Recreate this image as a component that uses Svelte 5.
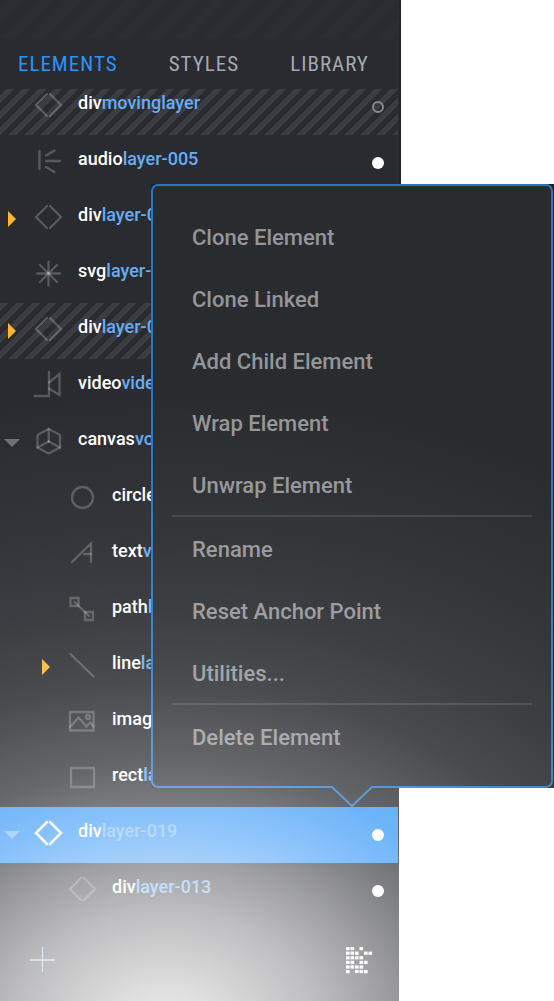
<script>
  const tabs = ['ELEMENTS', 'STYLES', 'LIBRARY'];
  let activeTab = $state('ELEMENTS');

  const layers = [
    { tag: 'div', name: 'movinglayer', icon: 'div', hatched: true, hollow: true },
    { tag: 'audio', name: 'layer-005', icon: 'audio' },
    { tag: 'div', name: 'layer-0', icon: 'div', caret: 'closed' },
    { tag: 'svg', name: 'layer-0', icon: 'svg' },
    { tag: 'div', name: 'layer-0', icon: 'div', caret: 'closed', hatched: true },
    { tag: 'video', name: 'video', icon: 'video' },
    { tag: 'canvas', name: 'vo', icon: 'canvas', caret: 'open' },
    { tag: 'circle', name: '', icon: 'circle', child: true },
    { tag: 'text', name: 'v', icon: 'text', child: true },
    { tag: 'path', name: 'l', icon: 'path', child: true },
    { tag: 'line', name: 'la', icon: 'line', child: true, caret: 'closed' },
    { tag: 'image', name: '', icon: 'image', child: true },
    { tag: 'rect', name: 'la', icon: 'rect', child: true }
  ];

  const selectedLayers = [
    { tag: 'div', name: 'layer-019', icon: 'div', caret: 'open', selected: true },
    { tag: 'div', name: 'layer-013', icon: 'div', child: true }
  ];

  const menuGroups = [
    ['Clone Element', 'Clone Linked', 'Add Child Element', 'Wrap Element', 'Unwrap Element'],
    ['Rename', 'Reset Anchor Point', 'Utilities...'],
    ['Delete Element']
  ];

  // Each entry is one stroke, so overlapping strokes build up brightness.
  const icons = {
    div: ['M19 9L8 20l11 11', 'M22 9l11 11-11 11'],
    audio: ['M11.5 10v18', 'M18 20h14', 'M18 14.5l8.500-5', 'M18 26l8.500 5'],
    svg: ['M20.500 9v23.500', 'M9 20.500h23', 'M12 12l17 17', 'M29 12l-17 17'],
    video: ['M6.500 31h14.500V7', 'M21 17.500l10.500-8.500v21l-10.500-6.500'],
    canvas: ['M20.700 8l11.300 6v12.500l-11.300 6-11.200-6V14z', 'M20.700 8v12.500', 'M20.700 20.500L9.500 26.500', 'M20.700 20.500L32 26.500'],
    circle: ['M10 20.500a10.500 10.500 0 1 0 21 0a10.500 10.500 0 1 0-21 0z'],
    text: ['M10 29L29 10.500V29', 'M22 21h7'],
    path: ['M8.500 9h8v8h-8z', 'M23 23h8v8h-8z', 'M12.500 13l14.500 14'],
    line: ['M8.500 9L31.500 31.500'],
    image: ['M8 11h23.500v18.500h-23.500z', 'M8 26l8.500-9.500 8 9M24 26l4.500-4.500 3 4', 'M24 16a2 2 0 1 0 4 0a2 2 0 1 0-4 0z'],
    rect: ['M9 11h23v19h-23z']
  };

  const bricks = ['110100', '111011', '111100', '110110', '111100', '101110'];
</script>

{#snippet row(layer)}
  <li class="row" class:hatched={layer.hatched} class:child={layer.child} class:selected={layer.selected}>
    <span class="gutter">
      {#if layer.caret}
        <button class="caret {layer.caret}" aria-label="Toggle {layer.tag}"></button>
      {/if}
    </span>
    <svg class="icon" viewBox="0 0 40 40" aria-hidden="true">
      {#each icons[layer.icon] as d}<path {d} />{/each}
    </svg>
    <span class="label"><b>{layer.tag}</b><span class="name">{layer.name}</span></span>
    <button class="dot" class:hollow={layer.hollow} aria-label="Visibility"></button>
  </li>
{/snippet}

<main>
  <aside>
    <div class="upper">
      <header>
        <div class="strip"></div>
        <nav>
          {#each tabs as tab}
            <button class:active={tab === activeTab} onclick={() => (activeTab = tab)}>{tab}</button>
          {/each}
        </nav>
      </header>
      <ul class="scrolled">
        {#each layers as layer}{@render row(layer)}{/each}
      </ul>
    </div>
    <ul>
      {#each selectedLayers as layer}{@render row(layer)}{/each}
    </ul>
    <footer>
      <button aria-label="Add element">
        <svg width="26" height="26" viewBox="0 0 26 26"><path d="M12.500 0v25" /><path class="wide" d="M0 13h25" /></svg>
      </button>
      <button aria-label="Pixel tools">
        <svg width="27" height="27" viewBox="0 0 27 27">
          {#each bricks as line, y}
            {#each line as cell, x}
              {#if cell === '1'}<rect x={x * 4.5} y={y * 4.6} width="3.6" height="3.2" />{/if}
            {/each}
          {/each}
        </svg>
      </button>
    </footer>
  </aside>

  <div class="popover">
    <div class="menu" role="menu">
      {#each menuGroups as group}
        <div class="group" role="group">
          {#each group as item}<button role="menuitem">{item}</button>{/each}
        </div>
      {/each}
    </div>
    <svg class="arrow" width="44" height="22" viewBox="0 0 44 22" aria-hidden="true">
      <path class="fill" d="M1 0h42v1L22 20 2 1z" />
      <path class="edge" d="M1 1h1L22 20 42 1h1" />
    </svg>
  </div>
</main>

<style>
  :global(body) {
    background: #fff;
  }

  main {
    position: relative;
    min-height: 100vh;
    display: flex;
    overflow: hidden;
    font-family: Roboto, 'Liberation Sans', sans-serif;
  }

  /* Light rising from below the sidebar, over panel and menu alike */
  main::after {
    content: '';
    position: absolute;
    inset: 0;
    z-index: 3;
    pointer-events: none;
    background: radial-gradient(
      820px 640px at 30% 103%,
      rgba(255, 255, 255, 0.92) 0,
      rgba(255, 255, 255, 0.87) 5%,
      rgba(255, 255, 255, 0.69) 19%,
      rgba(255, 255, 255, 0.55) 27%,
      rgba(255, 255, 255, 0.43) 33%,
      rgba(255, 255, 255, 0.36) 37%,
      rgba(255, 255, 255, 0.28) 42%,
      rgba(255, 255, 255, 0.23) 47%,
      rgba(255, 255, 255, 0.15) 55%,
      rgba(255, 255, 255, 0.09) 66%,
      rgba(255, 255, 255, 0.05) 78%,
      rgba(255, 255, 255, 0) 100%
    );
  }

  button {
    border: 0;
    padding: 0;
    background: none;
    color: inherit;
    font: inherit;
    letter-spacing: inherit;
    cursor: pointer;
  }

  aside {
    width: 72%;
    display: flex;
    flex-direction: column;
    background: #2a2b30;
  }

  .upper {
    box-shadow: 2px -20px #242529;
  }

  header {
    position: relative;
    z-index: 1;
    background: #2a2b30;
  }

  .strip {
    height: 39px;
    background: linear-gradient(135deg, #2a2e32 25%, #2a2b30 25% 50%, #2a2e32 50% 75%, #2a2b30 75%) 0 10px / 29px 29px;
  }

  nav {
    height: 50px;
    padding: 0 30px 0 18px;
    display: flex;
    align-items: center;
    justify-content: space-between;
    font-family: 'Liberation Sans Narrow', 'Roboto Condensed', Roboto, sans-serif;
    font-size: 21px;
    letter-spacing: 1px;
    color: #a4a8b1;
  }

  nav .active {
    color: #2a93f8;
  }

  ul {
    margin: 0;
    padding: 0;
    list-style: none;
  }

  .scrolled {
    margin-top: -10px;
  }

  .row {
    height: 56px;
    margin-right: 1px;
    padding-right: 14px;
    display: flex;
    align-items: center;
    font-size: 18px;
    line-height: 20px;
  }

  .child {
    padding-left: 34px;
  }

  .upper .row {
    background-color: #2a2b30;
  }

  .upper .hatched {
    background: linear-gradient(135deg, #3c3d42 25%, #2a2b30 25% 50%, #3c3d42 50% 75%, #2a2b30 75%) 0 0 / 16px 16px;
  }

  .selected {
    background: #3596f8;
  }

  .gutter {
    width: 28px;
    display: flex;
  }

  .caret {
    background: #ffb632;
  }

  .caret.closed {
    width: 8px;
    height: 16px;
    margin-left: 8px;
    clip-path: polygon(0 0, 100% 50%, 0 100%);
  }

  .caret.open {
    width: 16px;
    height: 8px;
    margin-left: 4px;
    background: #6d6e72;
    clip-path: polygon(0 0, 100% 0, 50% 100%);
  }

  .selected .caret.open {
    background: #7fbcf8;
  }

  .icon {
    width: 40px;
    height: 40px;
    margin: 0 10px 4px 0;
    fill: none;
    stroke: rgba(255, 255, 255, 0.22);
    stroke-width: 2.3;
    stroke-linecap: round;
  }

  .selected .icon {
    stroke: #fff;
    stroke-width: 2.5;
  }

  .label {
    flex: 1;
    padding-bottom: 8px;
    color: #66adf6;
    font-weight: 500;
    white-space: nowrap;
  }

  .label b {
    color: #fff;
    font-weight: 500;
  }

  .selected .name {
    color: #7fbcf8;
  }

  .dot {
    width: 12px;
    height: 12px;
    border-radius: 50%;
    background: #fff;
  }

  .dot.hollow {
    border: 2px solid #87888b;
    background: none;
  }

  footer {
    flex: 1;
    min-height: 82px;
    padding: 0 26px 0 30px;
    display: flex;
    align-items: center;
    justify-content: space-between;
  }

  footer button,
  footer svg {
    display: block;
  }

  footer path {
    stroke: #8fc4f5;
    stroke-width: 1;
  }

  footer .wide {
    stroke: #b0c8de;
    stroke-width: 2;
    opacity: 0.7;
  }

  footer rect {
    fill: #fff;
  }

  .popover {
    position: absolute;
    z-index: 2;
    top: 184px;
    left: 151px;
    right: 0;
    padding-right: 1px;
    background: #1f2023;
  }

  .menu {
    padding: 19px;
    border: 2px solid #2876c4;
    border-radius: 7px;
    background: #292c2f;
    color: #949598;
    font-size: 22px;
    font-weight: 500;
  }

  .group + .group {
    border-top: 2px solid #424448;
  }

  .menu button {
    display: block;
    width: 100%;
    height: 62px;
    padding: 2px 20px 0;
    text-align: left;
  }

  .arrow {
    position: absolute;
    top: calc(100% - 2px);
    right: 180px;
  }

  .arrow .fill {
    fill: #292c2f;
  }

  .arrow .edge {
    fill: none;
    stroke: #2876c4;
    stroke-width: 2;
  }
</style>
